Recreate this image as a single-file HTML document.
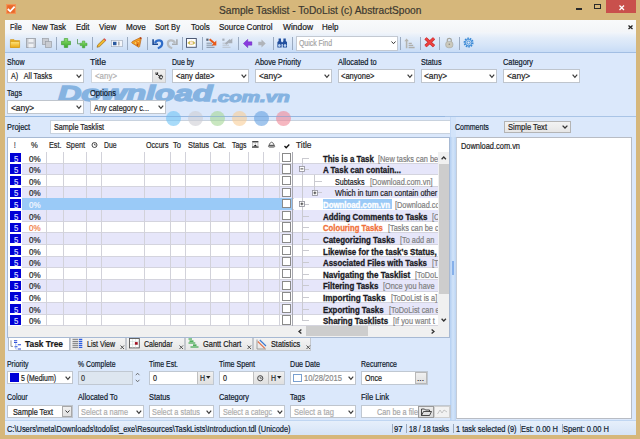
<!DOCTYPE html>
<html><head><meta charset="utf-8"><style>
*{margin:0;padding:0;box-sizing:border-box}
html,body{width:640px;height:439px;overflow:hidden}
body{background:#d6b77b;font-family:"Liberation Sans",sans-serif;position:relative}
.a{position:absolute}
.t{position:absolute;white-space:nowrap;line-height:1;transform-origin:0 0;-webkit-text-stroke:0.2px currentColor}
svg.a{overflow:visible}
</style></head><body>
<svg class="a" style="left:6.3px;top:4.3px" width="10" height="10" viewBox="0 0 10 10"><rect x="0" y="0" width="10" height="10" fill="#f39455"/><rect x="1.2" y="1.2" width="7.6" height="7.6" fill="#e9682a"/><path d="M1.8 5 L4.2 7.3 L8.6 2.6" stroke="#fff" stroke-width="1.8" fill="none"/></svg>
<div class="t" style="left:218.75px;top:4.69px;font-size:11px;color:#3b3830;transform:scaleX(0.924);">Sample Tasklist - ToDoList (c) AbstractSpoon</div>
<div class="a" style="left:576.3px;top:8.2px;width:5.6px;height:1.6px;background:#2a2a2a"></div>
<div class="a" style="left:593.5px;top:4.4px;width:7px;height:5px;border:1px solid #2a2a2a;border-top-width:1.6px"></div>
<div class="a" style="left:606.25px;top:0px;width:30px;height:13.1px;background:#c9504c"></div>
<svg class="a" style="left:618.5px;top:4.8px" width="5.5" height="5.5" viewBox="0 0 5.5 5.5"><path d="M0.5 0.5 L5 5 M5 0.5 L0.5 5" stroke="#fff" stroke-width="1.3"/></svg>
<div class="a" style="left:5px;top:20px;width:631px;height:415px;background:#dbe8fb"></div>
<div class="a" style="left:5px;top:20px;width:631px;height:12px;background:linear-gradient(#f9fafb,#f3f5f8)"></div>
<div class="t" style="left:10.1px;top:22.90px;font-size:8.5px;color:#1a1a1a;transform:scaleX(0.854);">File</div>
<div class="t" style="left:31.9px;top:22.90px;font-size:8.5px;color:#1a1a1a;transform:scaleX(0.927);">New Task</div>
<div class="t" style="left:75.7px;top:22.90px;font-size:8.5px;color:#1a1a1a;transform:scaleX(0.908);">Edit</div>
<div class="t" style="left:98.8px;top:22.90px;font-size:8.5px;color:#1a1a1a;transform:scaleX(0.941);">View</div>
<div class="t" style="left:125.6px;top:22.90px;font-size:8.5px;color:#1a1a1a;transform:scaleX(0.957);">Move</div>
<div class="t" style="left:155.3px;top:22.90px;font-size:8.5px;color:#1a1a1a;transform:scaleX(0.897);">Sort By</div>
<div class="t" style="left:190.7px;top:22.90px;font-size:8.5px;color:#1a1a1a;transform:scaleX(0.942);">Tools</div>
<div class="t" style="left:219.2px;top:22.90px;font-size:8.5px;color:#1a1a1a;transform:scaleX(0.942);">Source Control</div>
<div class="t" style="left:282.7px;top:22.90px;font-size:8.5px;color:#1a1a1a;transform:scaleX(0.992);">Window</div>
<div class="t" style="left:322.2px;top:22.90px;font-size:8.5px;color:#1a1a1a;transform:scaleX(0.932);">Help</div>
<svg class="a" style="left:628px;top:25px" width="5" height="4.5" viewBox="0 0 5 4.5"><path d="M0.5 0.5 L4.5 4 M4.5 0.5 L0.5 4" stroke="#222" stroke-width="1.3"/></svg>
<div class="a" style="left:5px;top:32px;width:631px;height:20px;background:linear-gradient(#f3f6fa 0%,#e2ecf9 30%,#d6e5f8 65%,#c8dcf6 100%)"></div>
<div class="a" style="left:5px;top:51.7px;width:631px;height:1px;background:#a2bee3"></div>
<div class="a" style="left:56px;top:37px;width:1px;height:12.5px;background:#9aaac0"></div>
<div class="a" style="left:91.6px;top:37px;width:1px;height:12.5px;background:#9aaac0"></div>
<div class="a" style="left:126.8px;top:37px;width:1px;height:12.5px;background:#9aaac0"></div>
<div class="a" style="left:146.5px;top:37px;width:1px;height:12.5px;background:#9aaac0"></div>
<div class="a" style="left:182.25px;top:37px;width:1px;height:12.5px;background:#9aaac0"></div>
<div class="a" style="left:201.5px;top:37px;width:1px;height:12.5px;background:#9aaac0"></div>
<div class="a" style="left:237.5px;top:37px;width:1px;height:12.5px;background:#9aaac0"></div>
<div class="a" style="left:272.6px;top:37px;width:1px;height:12.5px;background:#9aaac0"></div>
<div class="a" style="left:292.3px;top:37px;width:1px;height:12.5px;background:#9aaac0"></div>
<div class="a" style="left:400px;top:37px;width:1px;height:12.5px;background:#9aaac0"></div>
<div class="a" style="left:419.8px;top:37px;width:1px;height:12.5px;background:#9aaac0"></div>
<div class="a" style="left:439.4px;top:37px;width:1px;height:12.5px;background:#9aaac0"></div>
<div class="a" style="left:459.4px;top:37px;width:1px;height:12.5px;background:#9aaac0"></div>
<svg class="a" style="left:9.5px;top:38px" width="10" height="10" viewBox="0 0 10 10"><defs><linearGradient id="fg" x1="0" y1="0" x2="0" y2="1"><stop offset="0" stop-color="#fde27a"/><stop offset="1" stop-color="#eba812"/></linearGradient></defs><path d="M0.4 1.6 h3.6 l1 1 h4.6 v6.9 h-9.2z" fill="#e9b020" stroke="#c88a10" stroke-width="0.5"/><rect x="0.4" y="3.8" width="9.2" height="5.7" fill="url(#fg)" stroke="#d09512" stroke-width="0.4"/></svg>
<svg class="a" style="left:26px;top:38px" width="10" height="10" viewBox="0 0 10 10"><rect x="0.5" y="0.5" width="9" height="9" fill="#c9ccd2" stroke="#9a9ea6" stroke-width="0.8"/><rect x="2.5" y="1" width="5" height="3" fill="#eef0f3"/><rect x="2.5" y="6" width="5" height="3.5" fill="#eef0f3"/></svg>
<svg class="a" style="left:41.5px;top:38px" width="10" height="10" viewBox="0 0 10 10"><rect x="0.5" y="0.5" width="6" height="6" fill="#c9ccd2" stroke="#9a9ea6" stroke-width="0.7"/><rect x="3.5" y="3.5" width="6" height="6" fill="#c9ccd2" stroke="#9a9ea6" stroke-width="0.7"/></svg>
<svg class="a" style="left:61px;top:38px" width="10" height="10" viewBox="0 0 10 10"><defs><linearGradient id="gp" x1="0" y1="0" x2="0" y2="1"><stop offset="0" stop-color="#8ee070"/><stop offset="1" stop-color="#3aa82a"/></linearGradient></defs><path d="M3.3 0.5 h3.4 v2.8 h2.8 v3.4 h-2.8 v2.8 h-3.4 v-2.8 h-2.8 v-3.4 h2.8z" fill="url(#gp)" stroke="#3a9a2a" stroke-width="0.6"/></svg>
<svg class="a" style="left:76px;top:38px" width="12" height="10.5" viewBox="0 0 12 10.5"><path d="M1.5 1 v4.8 h2.6" stroke="#3f8a3a" stroke-width="0.7" fill="none"/><path d="M6.4 3 h2.4 v2.2 h2.2 v2.4 h-2.2 v2.2 h-2.4 v-2.2 h-2.2 v-2.4 h2.2z" fill="url(#gp)" stroke="#3a9a2a" stroke-width="0.5"/></svg>
<svg class="a" style="left:95.6px;top:38px" width="10.5" height="10" viewBox="0 0 10.5 10"><path d="M1 9.3 L1.8 6.8 L8 0.8 L9.8 2.5 L3.6 8.6z" fill="#f1b92e" stroke="#8a5a10" stroke-width="0.6"/><path d="M8 0.8 L9.8 2.5" stroke="#e04a5a" stroke-width="1.2"/></svg>
<svg class="a" style="left:111px;top:39.5px" width="11.5" height="7" viewBox="0 0 11.5 7"><rect x="0.3" y="0.3" width="11" height="6.4" fill="#f4f6fa" stroke="#9aa6b6" stroke-width="0.6"/><rect x="2" y="1.8" width="3.5" height="3.4" fill="#2a5aa0"/><rect x="7.5" y="1.6" width="0.8" height="3.8" fill="#666"/></svg>
<svg class="a" style="left:131px;top:37.3px" width="11" height="10.8" viewBox="0 0 11 10.8"><path d="M0.8 5.9 Q0.4 5.2 1.4 4.5 L9.3 0.6 Q10.4 0.3 10.2 1.6 L8.6 9.6 Q8.2 10.6 7.3 10 z" fill="#f2a424" stroke="#b8621a" stroke-width="0.7"/><path d="M3 5.6 L8.8 2.2 L7.6 8.4z" fill="#e8801c"/><circle cx="4.6" cy="6" r="0.9" fill="#fbd060"/><circle cx="6.4" cy="8" r="0.8" fill="#a83a10"/><circle cx="7.2" cy="4.6" r="0.8" fill="#fbd060"/><circle cx="9.6" cy="1.2" r="0.9" fill="#b04020"/></svg>
<svg class="a" style="left:151.5px;top:37.6px" width="11" height="11" viewBox="0 0 11 11"><path d="M3 5 C4.5 1.6 10 1.4 10.2 5.3 C10.3 8 8.4 9.5 5.8 10.2" stroke="#2f6cc8" stroke-width="2.2" fill="none"/><path d="M0.3 1.2 H1.9 V5.4 H6 V7 H0.3z" fill="#1d4a94"/></svg>
<svg class="a" style="left:166.5px;top:37.6px" width="11" height="11" viewBox="0 0 11 11"><path d="M8 5 C6.5 1.6 1 1.4 0.8 5.3 C0.7 8 2.6 9.5 5.2 10.2" stroke="#b8bcc0" stroke-width="2.2" fill="none"/><path d="M10.7 1.2 H9.1 V5.4 H5 V7 H10.7z" fill="#a8acb0"/></svg>
<svg class="a" style="left:186.1px;top:37.9px" width="10.8" height="9.8" viewBox="0 0 10.8 9.8"><rect x="0.5" y="0.5" width="9.8" height="8.8" fill="#fff" stroke="#4e5a74" stroke-width="1"/><path d="M1.3 4.9 Q5.4 0.6 9.5 4.9 Q5.4 9.2 1.3 4.9z" fill="#cdbb55"/><rect x="4" y="3.4" width="2.8" height="3" fill="#fde8dc"/></svg>
<svg class="a" style="left:206.25px;top:38px" width="11.5" height="10" viewBox="0 0 11.5 10"><rect x="0.3" y="0.6" width="2.2" height="2.2" fill="#556070"/><path d="M0.5 5.2 h5.5 M0.5 7.2 h6.5 M0.5 9.3 h8" stroke="#7a8898" stroke-width="0.9"/><path d="M3.6 1.2 L8.6 5.6" stroke="#e85a1a" stroke-width="2"/><path d="M10.3 2.6 V7.4 H5.6z" fill="#e85a1a"/></svg>
<svg class="a" style="left:221.9px;top:38px" width="11" height="10" viewBox="0 0 11 10"><rect x="0.3" y="0.6" width="2.2" height="2.2" fill="#a8b0ba"/><path d="M0.5 5.2 h5.5 M0.5 7.2 h6.5 M0.5 9.3 h8" stroke="#b8c0c8" stroke-width="0.9"/><path d="M3.6 6 L8.4 1.8" stroke="#a8aeb6" stroke-width="2"/><path d="M10.3 0.3 V5.2 H5.6z" fill="#a8aeb6"/></svg>
<svg class="a" style="left:242.5px;top:38.6px" width="9.2" height="9" viewBox="0 0 9.2 9"><path d="M0.3 4.5 L4.8 0.3 V2.8 H8.9 V6.2 H4.8 V8.7z" fill="#8a3ae0" stroke="#6020b0" stroke-width="0.4"/></svg>
<svg class="a" style="left:257.8px;top:38.6px" width="8" height="9" viewBox="0 0 8 9"><path d="M7.7 4.5 L3.5 0.5 V2.8 H0.3 V6.2 H3.5 V8.5z" fill="#b0b4ba"/></svg>
<svg class="a" style="left:277.3px;top:38px" width="10.4" height="10" viewBox="0 0 10.4 10"><path d="M1.6 0.5 h2.4 v2.5 l0.6 1 v5.5 h-4.2 v-5.5 l1.2 -1z M6.4 0.5 h2.4 v2.5 l1.2 1 v5.5 h-4.2 v-5.5 l0.6 -1z" fill="#23509e"/><rect x="3.6" y="4.2" width="3.2" height="1.8" fill="#23509e"/><ellipse cx="2.35" cy="7.6" rx="1.3" ry="1.5" fill="#bcd4f0"/><ellipse cx="8.05" cy="7.6" rx="1.3" ry="1.5" fill="#bcd4f0"/></svg>
<div class="a" style="left:296.25px;top:35.5px;width:102px;height:15px;background:#fff;border:1px solid #c3c9d2"></div>
<div class="t" style="left:299.4px;top:39.10px;font-size:8.5px;color:#a4a4a4;transform:scaleX(0.812);">Quick Find</div>
<svg class="a" style="left:390.5px;top:41.2px" width="5" height="3.5" viewBox="0 0 5 3.5"><path d="M0.5 0.5 L2.5 2.7 L4.5 0.5" stroke="#333" stroke-width="1" fill="none"/></svg>
<svg class="a" style="left:404.2px;top:37.5px" width="11" height="11" viewBox="0 0 11 11"><path d="M2.6 0.4 L0.3 3.2 H1.8 V10.2 H3.4 V3.2 H4.9z" fill="#b4b4b0"/><path d="M4.6 5.4 h3.2 M4.6 7.4 h4.6 M4.6 9.5 h6" stroke="#aeaeaa" stroke-width="1.3"/></svg>
<svg class="a" style="left:423.5px;top:37.3px" width="11.5" height="10.5" viewBox="0 0 11.5 10.5"><path d="M1.5 1.3 L10 9.2 M10 1.3 L1.5 9.2" stroke="#b82a2a" stroke-width="3.2"/><path d="M1.5 1.3 L10 9.2 M10 1.3 L1.5 9.2" stroke="#ee4040" stroke-width="2.1"/></svg>
<svg class="a" style="left:444.6px;top:37.2px" width="8.6" height="11.2" viewBox="0 0 8.6 11.2"><path d="M2.3 4.8 V3.2 C2.3 0.7 6.3 0.7 6.3 3.2 V4.8" stroke="#a4a49c" stroke-width="1.2" fill="none"/><rect x="0.7" y="4.4" width="7.2" height="6.3" rx="2.6" fill="#cbc9bc" stroke="#a4a49c" stroke-width="0.6"/><circle cx="4.3" cy="7.2" r="0.8" fill="#8a8a80"/></svg>
<svg class="a" style="left:462.6px;top:37.4px" width="11.2" height="11.2" viewBox="0 0 11.2 11.2"><circle cx="5.6" cy="5.6" r="4.1" fill="none" stroke="#3b8ad6" stroke-width="1.8" stroke-dasharray="1.6 0.9"/><circle cx="5.6" cy="5.6" r="3.2" fill="none" stroke="#3b8ad6" stroke-width="0.9"/><circle cx="5.6" cy="5.6" r="1.6" fill="none" stroke="#3b8ad6" stroke-width="0.9"/></svg>
<div class="t" style="left:57.5px;top:83.6px;font-size:21.5px;font-weight:bold;font-style:italic;color:#4d91d1;-webkit-text-stroke:1.4px #4d91d1;transform:scaleX(1.505);opacity:0.6">Download</div>
<div class="t" style="left:211.5px;top:90.3px;font-size:14px;font-weight:bold;font-style:italic;color:#4d91d1;-webkit-text-stroke:1.1px #4d91d1;transform:scaleX(1.47);opacity:0.6">.com.vn</div>
<div class="t" style="left:6.5px;top:57.80px;font-size:8.5px;color:#0f1a2c;transform:scaleX(0.823);">Show</div>
<div class="t" style="left:90px;top:57.80px;font-size:8.5px;color:#0f1a2c;transform:scaleX(1.016);">Title</div>
<div class="t" style="left:172px;top:57.80px;font-size:8.5px;color:#0f1a2c;transform:scaleX(0.817);">Due by</div>
<div class="t" style="left:255px;top:57.80px;font-size:8.5px;color:#0f1a2c;transform:scaleX(0.869);">Above Priority</div>
<div class="t" style="left:337.5px;top:57.80px;font-size:8.5px;color:#0f1a2c;transform:scaleX(0.872);">Allocated to</div>
<div class="t" style="left:420.5px;top:57.80px;font-size:8.5px;color:#0f1a2c;transform:scaleX(0.851);">Status</div>
<div class="t" style="left:503px;top:57.80px;font-size:8.5px;color:#0f1a2c;transform:scaleX(0.870);">Category</div>
<div class="a" style="left:7px;top:69px;width:76.5px;height:13.8px;background:#fff;border:1px solid #bfc5cd"></div>
<div class="t" style="left:10.7px;top:72.30px;font-size:8.5px;color:#1e1e1e;transform:scaleX(0.845);">A)&nbsp;&nbsp; All Tasks</div>
<svg class="a" style="left:75.5px;top:73.9px" width="5.8" height="4.2" viewBox="0 0 5.8 4.2"><path d="M0.6 0.6 L2.9 3.3 L5.2 0.6" stroke="#3a3a3a" stroke-width="1.2" fill="none"/></svg>
<div class="a" style="left:90.5px;top:69px;width:62px;height:13.8px;background:#fff;border:1px solid #cfd6de"></div>
<div class="t" style="left:94.5px;top:71.90px;font-size:8.5px;color:#b0b0b0;transform:scaleX(0.931);">&lt;any&gt;</div>
<div class="a" style="left:152px;top:69.2px;width:14px;height:13.4px;background:linear-gradient(#f0f0f0,#e4e4e4);border:1px solid #c8cbd0"></div>
<svg class="a" style="left:154.8px;top:72px" width="9" height="8.5" viewBox="0 0 9 8.5"><path d="M1 0.4 V2.6 M2.6 0.4 V2 M1 2.6 L2.2 2.2 L4.6 4.4" stroke="#222" stroke-width="1" fill="none"/><path d="M4.2 3.6 L6.2 2.6 L8.2 4.6 L6.8 7.6 L4.8 7.2 L3.6 5.4z" fill="#444"/><circle cx="6.1" cy="5.2" r="1" fill="#eee"/></svg>
<div class="a" style="left:172px;top:69px;width:77px;height:13.8px;background:#fff;border:1px solid #bfc5cd"></div>
<div class="t" style="left:175.7px;top:72.30px;font-size:8.5px;color:#1e1e1e;transform:scaleX(0.905);">&lt;any date&gt;</div>
<svg class="a" style="left:241.0px;top:73.9px" width="5.8" height="4.2" viewBox="0 0 5.8 4.2"><path d="M0.6 0.6 L2.9 3.3 L5.2 0.6" stroke="#3a3a3a" stroke-width="1.2" fill="none"/></svg>
<div class="a" style="left:255px;top:69px;width:76.5px;height:13.8px;background:#fff;border:1px solid #bfc5cd"></div>
<div class="t" style="left:258.7px;top:72.30px;font-size:8.5px;color:#1e1e1e;transform:scaleX(0.982);">&lt;any&gt;</div>
<svg class="a" style="left:323.5px;top:73.9px" width="5.8" height="4.2" viewBox="0 0 5.8 4.2"><path d="M0.6 0.6 L2.9 3.3 L5.2 0.6" stroke="#3a3a3a" stroke-width="1.2" fill="none"/></svg>
<div class="a" style="left:337.5px;top:69px;width:77px;height:13.8px;background:#fff;border:1px solid #bfc5cd"></div>
<div class="t" style="left:341.2px;top:72.30px;font-size:8.5px;color:#1e1e1e;transform:scaleX(0.886);">&lt;anyone&gt;</div>
<svg class="a" style="left:406.5px;top:73.9px" width="5.8" height="4.2" viewBox="0 0 5.8 4.2"><path d="M0.6 0.6 L2.9 3.3 L5.2 0.6" stroke="#3a3a3a" stroke-width="1.2" fill="none"/></svg>
<div class="a" style="left:420.5px;top:69px;width:76px;height:13.8px;background:#fff;border:1px solid #bfc5cd"></div>
<div class="t" style="left:424.2px;top:72.30px;font-size:8.5px;color:#1e1e1e;transform:scaleX(0.982);">&lt;any&gt;</div>
<svg class="a" style="left:488.5px;top:73.9px" width="5.8" height="4.2" viewBox="0 0 5.8 4.2"><path d="M0.6 0.6 L2.9 3.3 L5.2 0.6" stroke="#3a3a3a" stroke-width="1.2" fill="none"/></svg>
<div class="a" style="left:503px;top:69px;width:77px;height:13.8px;background:#fff;border:1px solid #bfc5cd"></div>
<div class="t" style="left:506.7px;top:72.30px;font-size:8.5px;color:#1e1e1e;transform:scaleX(0.982);">&lt;any&gt;</div>
<svg class="a" style="left:572.0px;top:73.9px" width="5.8" height="4.2" viewBox="0 0 5.8 4.2"><path d="M0.6 0.6 L2.9 3.3 L5.2 0.6" stroke="#3a3a3a" stroke-width="1.2" fill="none"/></svg>
<div class="t" style="left:7px;top:89.00px;font-size:8.5px;color:#0f1a2c;transform:scaleX(0.835);">Tags</div>
<div class="t" style="left:90px;top:89.00px;font-size:8.5px;color:#0f1a2c;transform:scaleX(0.888);">Options</div>
<div class="a" style="left:7px;top:100.4px;width:76.6px;height:13.6px;background:#fff;border:1px solid #bfc5cd"></div>
<div class="t" style="left:10.7px;top:103.70px;font-size:8.5px;color:#1e1e1e;transform:scaleX(0.982);">&lt;any&gt;</div>
<svg class="a" style="left:75.6px;top:105.30000000000001px" width="5.8" height="4.2" viewBox="0 0 5.8 4.2"><path d="M0.6 0.6 L2.9 3.3 L5.2 0.6" stroke="#3a3a3a" stroke-width="1.2" fill="none"/></svg>
<div class="a" style="left:90px;top:100.4px;width:75.6px;height:13.6px;background:#fff;border:1px solid #bfc5cd"></div>
<div class="t" style="left:93.7px;top:103.70px;font-size:8.5px;color:#1e1e1e;transform:scaleX(0.869);">Any category c...</div>
<svg class="a" style="left:157.6px;top:105.30000000000001px" width="5.8" height="4.2" viewBox="0 0 5.8 4.2"><path d="M0.6 0.6 L2.9 3.3 L5.2 0.6" stroke="#3a3a3a" stroke-width="1.2" fill="none"/></svg>
<div class="a" style="left:5px;top:115.5px;width:631px;height:1px;background:#a9c4e6"></div>
<div class="t" style="left:6.5px;top:122.70px;font-size:8.5px;color:#0f1a2c;transform:scaleX(0.869);">Project</div>
<div class="a" style="left:49.5px;top:119.8px;width:401px;height:13.8px;background:#fff;border:1px solid #c8d2de"></div>
<div class="t" style="left:53.5px;top:122.70px;font-size:8.5px;color:#1e1e1e;transform:scaleX(0.849);">Sample Tasklist</div>
<div class="a" style="left:165.9px;top:111.4px;width:14.8px;height:15px;border-radius:50%;background:rgba(110,195,245,0.6)"></div>
<div class="a" style="left:188.1px;top:111.4px;width:14.8px;height:15px;border-radius:50%;background:rgba(205,205,212,0.6)"></div>
<div class="a" style="left:210.1px;top:111.4px;width:14.8px;height:15px;border-radius:50%;background:rgba(165,215,150,0.6)"></div>
<div class="a" style="left:231.9px;top:111.4px;width:14.8px;height:15px;border-radius:50%;background:rgba(248,205,150,0.6)"></div>
<div class="a" style="left:253.9px;top:111.4px;width:14.8px;height:15px;border-radius:50%;background:rgba(100,160,225,0.6)"></div>
<div class="a" style="left:276.40000000000003px;top:111.4px;width:14.8px;height:15px;border-radius:50%;background:rgba(240,135,150,0.6)"></div>
<div class="a" style="left:5px;top:115.5px;width:440px;height:0.8px;background:rgba(130,170,220,0.5)"></div>
<div class="a" style="left:6.5px;top:137.2px;width:443.0px;height:200.8px;background:#fff;border:1px solid #a7b9d3"></div>
<div class="t" style="left:14.3px;top:141.00px;font-size:8.5px;color:#2a2a2a;transform:scaleX(0.678);">!</div>
<div class="t" style="left:31px;top:141.00px;font-size:8.5px;color:#2a2a2a;transform:scaleX(0.900);">%</div>
<div class="t" style="left:48.5px;top:141.00px;font-size:8.5px;color:#2a2a2a;transform:scaleX(0.854);">Est.</div>
<div class="t" style="left:65.5px;top:141.00px;font-size:8.5px;color:#2a2a2a;transform:scaleX(0.855);">Spent</div>
<div class="t" style="left:103.9px;top:141.00px;font-size:8.5px;color:#2a2a2a;transform:scaleX(0.808);">Due</div>
<div class="t" style="left:146px;top:141.00px;font-size:8.5px;color:#2a2a2a;transform:scaleX(0.836);">Occurs</div>
<div class="t" style="left:172.5px;top:141.00px;font-size:8.5px;color:#2a2a2a;transform:scaleX(0.891);">To</div>
<div class="t" style="left:187.5px;top:141.00px;font-size:8.5px;color:#2a2a2a;transform:scaleX(0.872);">Status</div>
<div class="t" style="left:213px;top:141.00px;font-size:8.5px;color:#2a2a2a;transform:scaleX(0.834);">Cat.</div>
<div class="t" style="left:231.5px;top:141.00px;font-size:8.5px;color:#2a2a2a;transform:scaleX(0.808);">Tags</div>
<div class="t" style="left:296.25px;top:141.00px;font-size:8.5px;color:#2a2a2a;transform:scaleX(0.985);">Title</div>
<svg class="a" style="left:91.2px;top:142px" width="7" height="6" viewBox="0 0 7 6"><circle cx="3.5" cy="3" r="2.5" fill="none" stroke="#333" stroke-width="0.9"/><path d="M3.5 1.6 V3 H5" stroke="#333" stroke-width="0.7" fill="none"/></svg>
<svg class="a" style="left:252.2px;top:141px" width="6.6" height="6.8" viewBox="0 0 6.6 6.8"><rect x="0.2" y="0" width="6.2" height="1.5" fill="#4a4a4a"/><rect x="0" y="5.3" width="6.6" height="1.5" fill="#4a4a4a"/><path d="M0.7 1.5 V5.3 M5.9 1.5 V5.3" stroke="#999" stroke-width="0.7"/><path d="M1.6 5.3 L3.3 3.4 L5 5.3z" fill="#111"/><path d="M1.8 1.8 H4.8 L3.3 3.1z" fill="#bbb"/></svg>
<svg class="a" style="left:268.2px;top:141px" width="7.2" height="6.6" viewBox="0 0 7.2 6.6"><path d="M1.4 4.4 V3.2 Q3.6 -0.8 5.8 3.2 V4.4" fill="none" stroke="#555" stroke-width="0.9"/><rect x="0.45" y="4.2" width="6.3" height="2" rx="1" fill="#fff" stroke="#555" stroke-width="0.8"/><path d="M1 4.9 H6.2" stroke="#222" stroke-width="0.9"/></svg>
<svg class="a" style="left:283.6px;top:143.6px" width="5.8" height="4.4" viewBox="0 0 5.8 4.4"><path d="M0.5 2 L2.2 3.8 L5.3 0.5" stroke="#111" stroke-width="1.3" fill="none"/></svg>
<div class="a" style="left:22px;top:163.22px;width:426.5px;height:11.62px;background:#e6e6fa"></div>
<div class="a" style="left:22px;top:186.45999999999998px;width:426.5px;height:11.62px;background:#e6e6fa"></div>
<div class="a" style="left:22px;top:209.7px;width:426.5px;height:11.62px;background:#e6e6fa"></div>
<div class="a" style="left:22px;top:232.94px;width:426.5px;height:11.62px;background:#e6e6fa"></div>
<div class="a" style="left:22px;top:256.18px;width:426.5px;height:11.62px;background:#e6e6fa"></div>
<div class="a" style="left:22px;top:279.41999999999996px;width:426.5px;height:11.62px;background:#e6e6fa"></div>
<div class="a" style="left:22px;top:302.65999999999997px;width:426.5px;height:11.62px;background:#e6e6fa"></div>
<div class="a" style="left:22px;top:162.72px;width:416.4px;height:0.7px;background:#d4d4de"></div>
<div class="a" style="left:22px;top:174.34px;width:416.4px;height:0.7px;background:#d4d4de"></div>
<div class="a" style="left:22px;top:185.95999999999998px;width:416.4px;height:0.7px;background:#d4d4de"></div>
<div class="a" style="left:22px;top:197.57999999999998px;width:416.4px;height:0.7px;background:#d4d4de"></div>
<div class="a" style="left:22px;top:209.2px;width:416.4px;height:0.7px;background:#d4d4de"></div>
<div class="a" style="left:22px;top:220.82px;width:416.4px;height:0.7px;background:#d4d4de"></div>
<div class="a" style="left:22px;top:232.44px;width:416.4px;height:0.7px;background:#d4d4de"></div>
<div class="a" style="left:22px;top:244.06px;width:416.4px;height:0.7px;background:#d4d4de"></div>
<div class="a" style="left:22px;top:255.68px;width:416.4px;height:0.7px;background:#d4d4de"></div>
<div class="a" style="left:22px;top:267.29999999999995px;width:416.4px;height:0.7px;background:#d4d4de"></div>
<div class="a" style="left:22px;top:278.91999999999996px;width:416.4px;height:0.7px;background:#d4d4de"></div>
<div class="a" style="left:22px;top:290.53999999999996px;width:416.4px;height:0.7px;background:#d4d4de"></div>
<div class="a" style="left:22px;top:302.15999999999997px;width:416.4px;height:0.7px;background:#d4d4de"></div>
<div class="a" style="left:22px;top:313.78px;width:416.4px;height:0.7px;background:#d4d4de"></div>
<div class="a" style="left:22px;top:325.4px;width:416.4px;height:0.7px;background:#d4d4de"></div>
<div class="a" style="left:46.25px;top:151.6px;width:0.7px;height:174.29999999999998px;background:#d2d2da"></div>
<div class="a" style="left:63.3px;top:151.6px;width:0.7px;height:174.29999999999998px;background:#d2d2da"></div>
<div class="a" style="left:86.1px;top:151.6px;width:0.7px;height:174.29999999999998px;background:#d2d2da"></div>
<div class="a" style="left:101.1px;top:151.6px;width:0.7px;height:174.29999999999998px;background:#d2d2da"></div>
<div class="a" style="left:143.8px;top:151.6px;width:0.7px;height:174.29999999999998px;background:#d2d2da"></div>
<div class="a" style="left:170.1px;top:151.6px;width:0.7px;height:174.29999999999998px;background:#d2d2da"></div>
<div class="a" style="left:185.1px;top:151.6px;width:0.7px;height:174.29999999999998px;background:#d2d2da"></div>
<div class="a" style="left:209.9px;top:151.6px;width:0.7px;height:174.29999999999998px;background:#d2d2da"></div>
<div class="a" style="left:228.7px;top:151.6px;width:0.7px;height:174.29999999999998px;background:#d2d2da"></div>
<div class="a" style="left:247.9px;top:151.6px;width:0.7px;height:174.29999999999998px;background:#d2d2da"></div>
<div class="a" style="left:263.25px;top:151.6px;width:0.7px;height:174.29999999999998px;background:#d2d2da"></div>
<div class="a" style="left:278.75px;top:151.6px;width:0.7px;height:174.29999999999998px;background:#d2d2da"></div>
<div class="a" style="left:22px;top:198.07999999999998px;width:271.3px;height:11.62px;background:#9acaf7"></div>
<div class="a" style="left:292px;top:151.6px;width:1px;height:174.29999999999998px;background:#a8a8b0"></div>
<div class="a" style="left:293.6px;top:151.6px;width:144.8px;height:174px;overflow:hidden">
<div class="a" style="left:0px;top:46.48px;width:144.8px;height:11.62px;background:#fff"></div>
<div class="a" style="left:29.099999999999966px;top:46.98px;width:69.1px;height:10.62px;background:#9acaf7"></div>
<div class="a" style="left:8.199999999999989px;top:6.310000000000002px;width:0.8px;height:162.67999999999998px;background:#cacad0"></div>
<div class="a" style="left:8.399999999999977px;top:5.909999999999997px;width:7.3px;height:0.8px;background:#cacad0"></div>
<div class="a" style="left:8.399999999999977px;top:17.53px;width:7.3px;height:0.8px;background:#cacad0"></div>
<div class="a" style="left:20.899999999999977px;top:29.149999999999977px;width:7.5px;height:0.8px;background:#cacad0"></div>
<div class="a" style="left:20.899999999999977px;top:40.76999999999998px;width:7.5px;height:0.8px;background:#cacad0"></div>
<div class="a" style="left:8.399999999999977px;top:52.389999999999986px;width:7.3px;height:0.8px;background:#cacad0"></div>
<div class="a" style="left:8.399999999999977px;top:64.00999999999999px;width:7.3px;height:0.8px;background:#cacad0"></div>
<div class="a" style="left:8.399999999999977px;top:75.63px;width:7.3px;height:0.8px;background:#cacad0"></div>
<div class="a" style="left:8.399999999999977px;top:87.25px;width:7.3px;height:0.8px;background:#cacad0"></div>
<div class="a" style="left:8.399999999999977px;top:98.87px;width:7.3px;height:0.8px;background:#cacad0"></div>
<div class="a" style="left:8.399999999999977px;top:110.49000000000004px;width:7.3px;height:0.8px;background:#cacad0"></div>
<div class="a" style="left:8.399999999999977px;top:122.11000000000004px;width:7.3px;height:0.8px;background:#cacad0"></div>
<div class="a" style="left:8.399999999999977px;top:133.73000000000005px;width:7.3px;height:0.8px;background:#cacad0"></div>
<div class="a" style="left:8.399999999999977px;top:145.35000000000005px;width:7.3px;height:0.8px;background:#cacad0"></div>
<div class="a" style="left:8.399999999999977px;top:156.97px;width:7.3px;height:0.8px;background:#cacad0"></div>
<div class="a" style="left:8.399999999999977px;top:168.59px;width:7.3px;height:0.8px;background:#cacad0"></div>
<div class="a" style="left:20.899999999999977px;top:23.24000000000001px;width:0.8px;height:17.93px;background:#cacad0"></div>
<svg class="a" style="left:5.7px;top:14.83px" width="5.8" height="5.8" viewBox="0 0 5.8 5.8"><rect x="0.4" y="0.4" width="5" height="5" fill="#fff" stroke="#8e8e98" stroke-width="0.8"/><path d="M1.5 2.9 H4.3" stroke="#333" stroke-width="0.9"/></svg>
<svg class="a" style="left:18.7px;top:38.07px" width="5.8" height="5.8" viewBox="0 0 5.8 5.8"><rect x="0.4" y="0.4" width="5" height="5" fill="#fff" stroke="#8e8e98" stroke-width="0.8"/><path d="M1.5 2.9 H4.3" stroke="#333" stroke-width="0.9"/><path d="M2.9 1.5 V4.3" stroke="#333" stroke-width="0.9"/></svg>
<svg class="a" style="left:5.7px;top:49.69px" width="5.8" height="5.8" viewBox="0 0 5.8 5.8"><rect x="0.4" y="0.4" width="5" height="5" fill="#fff" stroke="#8e8e98" stroke-width="0.8"/><path d="M1.5 2.9 H4.3" stroke="#333" stroke-width="0.9"/><path d="M2.9 1.5 V4.3" stroke="#333" stroke-width="0.9"/></svg>
<div class="t" style="left:29.80px;top:3.00px;font-size:8.5px;color:#1a1a24;transform:scaleX(0.922);font-weight:bold;-webkit-text-stroke:0.3px currentColor;">This is a Task</div>
<div class="t" style="left:84.80px;top:3.00px;font-size:8.5px;color:#808080;transform:scaleX(0.865)">[New tasks can be</div>
<div class="t" style="left:29.80px;top:14.62px;font-size:8.5px;color:#1a1a24;transform:scaleX(0.931);font-weight:bold;-webkit-text-stroke:0.3px currentColor;">A Task can contain...</div>
<div class="t" style="left:41.90px;top:26.24px;font-size:8.5px;color:#1a1a24;transform:scaleX(0.844);">Subtasks</div>
<div class="t" style="left:76.00px;top:26.24px;font-size:8.5px;color:#808080;transform:scaleX(0.865)">[Download.com.vn]</div>
<div class="t" style="left:41.90px;top:37.86px;font-size:8.5px;color:#1a1a24;transform:scaleX(0.873);">Which in turn can contain other</div>
<div class="t" style="left:29.80px;top:49.48px;font-size:8.5px;color:#ffffff;transform:scaleX(0.921);font-weight:bold;-webkit-text-stroke:0.3px currentColor;">Download.com.vn</div>
<div class="t" style="left:101.60px;top:49.48px;font-size:8.5px;color:#808080;transform:scaleX(0.865)">[Download.co</div>
<div class="t" style="left:29.80px;top:61.10px;font-size:8.5px;color:#1a1a24;transform:scaleX(0.934);font-weight:bold;-webkit-text-stroke:0.3px currentColor;">Adding Comments to Tasks</div>
<div class="t" style="left:138.50px;top:61.10px;font-size:8.5px;color:#808080;transform:scaleX(0.865)">[C</div>
<div class="t" style="left:29.80px;top:72.72px;font-size:8.5px;color:#f0703a;transform:scaleX(0.907);font-weight:bold;-webkit-text-stroke:0.3px currentColor;">Colouring Tasks</div>
<div class="t" style="left:94.70px;top:72.72px;font-size:8.5px;color:#808080;transform:scaleX(0.865)">[Tasks can be c</div>
<div class="t" style="left:29.80px;top:84.34px;font-size:8.5px;color:#1a1a24;transform:scaleX(0.931);font-weight:bold;-webkit-text-stroke:0.3px currentColor;">Categorizing Tasks</div>
<div class="t" style="left:106.60px;top:84.34px;font-size:8.5px;color:#808080;transform:scaleX(0.865)">[To add an</div>
<div class="t" style="left:29.80px;top:95.96px;font-size:8.5px;color:#1a1a24;transform:scaleX(0.939);font-weight:bold;-webkit-text-stroke:0.3px currentColor;">Likewise for the task's Status,</div>
<div class="t" style="left:29.80px;top:107.58px;font-size:8.5px;color:#1a1a24;transform:scaleX(0.926);font-weight:bold;-webkit-text-stroke:0.3px currentColor;">Associated Files with Tasks</div>
<div class="t" style="left:138.00px;top:107.58px;font-size:8.5px;color:#808080;transform:scaleX(0.865)">[T</div>
<div class="t" style="left:29.80px;top:119.20px;font-size:8.5px;color:#1a1a24;transform:scaleX(0.947);font-weight:bold;-webkit-text-stroke:0.3px currentColor;">Navigating the Tasklist</div>
<div class="t" style="left:121.80px;top:119.20px;font-size:8.5px;color:#808080;transform:scaleX(0.865)">[ToDoL</div>
<div class="t" style="left:29.80px;top:130.82px;font-size:8.5px;color:#1a1a24;transform:scaleX(0.932);font-weight:bold;-webkit-text-stroke:0.3px currentColor;">Filtering Tasks</div>
<div class="t" style="left:89.90px;top:130.82px;font-size:8.5px;color:#808080;transform:scaleX(0.865)">[Once you have</div>
<div class="t" style="left:29.80px;top:142.44px;font-size:8.5px;color:#1a1a24;transform:scaleX(0.960);font-weight:bold;-webkit-text-stroke:0.3px currentColor;">Importing Tasks</div>
<div class="t" style="left:97.40px;top:142.44px;font-size:8.5px;color:#808080;transform:scaleX(0.865)">[ToDoList is a]</div>
<div class="t" style="left:29.80px;top:154.06px;font-size:8.5px;color:#1a1a24;transform:scaleX(0.925);font-weight:bold;-webkit-text-stroke:0.3px currentColor;">Exporting Tasks</div>
<div class="t" style="left:95.20px;top:154.06px;font-size:8.5px;color:#808080;transform:scaleX(0.865)">[ToDoList can e</div>
<div class="t" style="left:29.80px;top:165.68px;font-size:8.5px;color:#1a1a24;transform:scaleX(0.933);font-weight:bold;-webkit-text-stroke:0.3px currentColor;">Sharing Tasklists</div>
<div class="t" style="left:99.40px;top:165.68px;font-size:8.5px;color:#808080;transform:scaleX(0.865)">[If you want t</div>
</div>
<div class="a" style="left:9.8px;top:152.79999999999998px;width:11px;height:9.1px;background:#0000d6"></div>
<div class="t" style="left:13.6px;top:154.60px;font-size:8.5px;color:#d8dcff;transform:scaleX(0.910);">5</div>
<div class="t" style="left:28.9px;top:154.60px;font-size:8.5px;color:#1e1e1e;transform:scaleX(0.944);">0%</div>
<div class="a" style="left:282px;top:152.7px;width:8.5px;height:9.2px;background:#fff;border:1px solid #8a8a8a"></div>
<div class="a" style="left:9.8px;top:164.42px;width:11px;height:9.1px;background:#0000d6"></div>
<div class="t" style="left:13.6px;top:166.22px;font-size:8.5px;color:#d8dcff;transform:scaleX(0.910);">5</div>
<div class="t" style="left:28.9px;top:166.22px;font-size:8.5px;color:#1e1e1e;transform:scaleX(0.944);">0%</div>
<div class="a" style="left:282px;top:164.32px;width:8.5px;height:9.2px;background:#fff;border:1px solid #8a8a8a"></div>
<div class="a" style="left:9.8px;top:176.04px;width:11px;height:9.1px;background:#0000d6"></div>
<div class="t" style="left:13.6px;top:177.84px;font-size:8.5px;color:#d8dcff;transform:scaleX(0.910);">5</div>
<div class="t" style="left:28.9px;top:177.84px;font-size:8.5px;color:#1e1e1e;transform:scaleX(0.944);">0%</div>
<div class="a" style="left:282px;top:175.94px;width:8.5px;height:9.2px;background:#fff;border:1px solid #8a8a8a"></div>
<div class="a" style="left:9.8px;top:187.65999999999997px;width:11px;height:9.1px;background:#0000d6"></div>
<div class="t" style="left:13.6px;top:189.46px;font-size:8.5px;color:#d8dcff;transform:scaleX(0.910);">5</div>
<div class="t" style="left:28.9px;top:189.46px;font-size:8.5px;color:#1e1e1e;transform:scaleX(0.944);">0%</div>
<div class="a" style="left:282px;top:187.55999999999997px;width:8.5px;height:9.2px;background:#fff;border:1px solid #8a8a8a"></div>
<div class="a" style="left:9.8px;top:199.27999999999997px;width:11px;height:9.1px;background:#0000d6"></div>
<div class="t" style="left:13.6px;top:201.08px;font-size:8.5px;color:#d8dcff;transform:scaleX(0.910);">5</div>
<div class="t" style="left:28.9px;top:201.08px;font-size:8.5px;color:#f4f8ff;transform:scaleX(0.944);">0%</div>
<div class="a" style="left:282px;top:199.17999999999998px;width:8.5px;height:9.2px;background:#fff;border:1px solid #8a8a8a"></div>
<div class="a" style="left:9.8px;top:210.89999999999998px;width:11px;height:9.1px;background:#0000d6"></div>
<div class="t" style="left:13.6px;top:212.70px;font-size:8.5px;color:#d8dcff;transform:scaleX(0.910);">5</div>
<div class="t" style="left:28.9px;top:212.70px;font-size:8.5px;color:#1e1e1e;transform:scaleX(0.944);">0%</div>
<div class="a" style="left:282px;top:210.79999999999998px;width:8.5px;height:9.2px;background:#fff;border:1px solid #8a8a8a"></div>
<div class="a" style="left:9.8px;top:222.51999999999998px;width:11px;height:9.1px;background:#0000d6"></div>
<div class="t" style="left:13.6px;top:224.32px;font-size:8.5px;color:#d8dcff;transform:scaleX(0.910);">5</div>
<div class="t" style="left:28.9px;top:224.32px;font-size:8.5px;color:#f07a40;transform:scaleX(0.944);">0%</div>
<div class="a" style="left:282px;top:222.42px;width:8.5px;height:9.2px;background:#fff;border:1px solid #8a8a8a"></div>
<div class="a" style="left:9.8px;top:234.14px;width:11px;height:9.1px;background:#0000d6"></div>
<div class="t" style="left:13.6px;top:235.94px;font-size:8.5px;color:#d8dcff;transform:scaleX(0.910);">5</div>
<div class="t" style="left:28.9px;top:235.94px;font-size:8.5px;color:#1e1e1e;transform:scaleX(0.944);">0%</div>
<div class="a" style="left:282px;top:234.04px;width:8.5px;height:9.2px;background:#fff;border:1px solid #8a8a8a"></div>
<div class="a" style="left:9.8px;top:245.76px;width:11px;height:9.1px;background:#0000d6"></div>
<div class="t" style="left:13.6px;top:247.56px;font-size:8.5px;color:#d8dcff;transform:scaleX(0.910);">5</div>
<div class="t" style="left:28.9px;top:247.56px;font-size:8.5px;color:#1e1e1e;transform:scaleX(0.944);">0%</div>
<div class="a" style="left:282px;top:245.66px;width:8.5px;height:9.2px;background:#fff;border:1px solid #8a8a8a"></div>
<div class="a" style="left:9.8px;top:257.38px;width:11px;height:9.1px;background:#0000d6"></div>
<div class="t" style="left:13.6px;top:259.18px;font-size:8.5px;color:#d8dcff;transform:scaleX(0.910);">5</div>
<div class="t" style="left:28.9px;top:259.18px;font-size:8.5px;color:#1e1e1e;transform:scaleX(0.944);">0%</div>
<div class="a" style="left:282px;top:257.28000000000003px;width:8.5px;height:9.2px;background:#fff;border:1px solid #8a8a8a"></div>
<div class="a" style="left:9.8px;top:268.99999999999994px;width:11px;height:9.1px;background:#0000d6"></div>
<div class="t" style="left:13.6px;top:270.80px;font-size:8.5px;color:#d8dcff;transform:scaleX(0.910);">5</div>
<div class="t" style="left:28.9px;top:270.80px;font-size:8.5px;color:#1e1e1e;transform:scaleX(0.944);">0%</div>
<div class="a" style="left:282px;top:268.9px;width:8.5px;height:9.2px;background:#fff;border:1px solid #8a8a8a"></div>
<div class="a" style="left:9.8px;top:280.61999999999995px;width:11px;height:9.1px;background:#0000d6"></div>
<div class="t" style="left:13.6px;top:282.42px;font-size:8.5px;color:#d8dcff;transform:scaleX(0.910);">5</div>
<div class="t" style="left:28.9px;top:282.42px;font-size:8.5px;color:#1e1e1e;transform:scaleX(0.944);">0%</div>
<div class="a" style="left:282px;top:280.52px;width:8.5px;height:9.2px;background:#fff;border:1px solid #8a8a8a"></div>
<div class="a" style="left:9.8px;top:292.23999999999995px;width:11px;height:9.1px;background:#0000d6"></div>
<div class="t" style="left:13.6px;top:294.04px;font-size:8.5px;color:#d8dcff;transform:scaleX(0.910);">5</div>
<div class="t" style="left:28.9px;top:294.04px;font-size:8.5px;color:#1e1e1e;transform:scaleX(0.944);">0%</div>
<div class="a" style="left:282px;top:292.14px;width:8.5px;height:9.2px;background:#fff;border:1px solid #8a8a8a"></div>
<div class="a" style="left:9.8px;top:303.85999999999996px;width:11px;height:9.1px;background:#0000d6"></div>
<div class="t" style="left:13.6px;top:305.66px;font-size:8.5px;color:#d8dcff;transform:scaleX(0.910);">5</div>
<div class="t" style="left:28.9px;top:305.66px;font-size:8.5px;color:#1e1e1e;transform:scaleX(0.944);">0%</div>
<div class="a" style="left:282px;top:303.76px;width:8.5px;height:9.2px;background:#fff;border:1px solid #8a8a8a"></div>
<div class="a" style="left:9.8px;top:315.47999999999996px;width:11px;height:9.1px;background:#0000d6"></div>
<div class="t" style="left:13.6px;top:317.28px;font-size:8.5px;color:#d8dcff;transform:scaleX(0.910);">5</div>
<div class="t" style="left:28.9px;top:317.28px;font-size:8.5px;color:#1e1e1e;transform:scaleX(0.944);">0%</div>
<div class="a" style="left:282px;top:315.38px;width:8.5px;height:9.2px;background:#fff;border:1px solid #8a8a8a"></div>
<div class="a" style="left:438.4px;top:151.6px;width:11px;height:174px;background:#f0f0f0"></div>
<div class="a" style="left:439px;top:164px;width:9.8px;height:130px;background:#cdcdcd"></div>
<svg class="a" style="left:441.2px;top:156.3px" width="5.5" height="4" viewBox="0 0 5.5 4"><path d="M0.6 3.3 L2.75 1 L4.9 3.3" stroke="#333" stroke-width="1.3" fill="none"/></svg>
<svg class="a" style="left:441.2px;top:317.5px" width="5.5" height="4" viewBox="0 0 5.5 4"><path d="M0.6 0.7 L2.75 3 L4.9 0.7" stroke="#333" stroke-width="1.3" fill="none"/></svg>
<div class="a" style="left:7.5px;top:325.6px;width:441px;height:11.6px;background:#f0f0f0"></div>
<div class="a" style="left:306px;top:326.3px;width:62px;height:9.5px;background:#cdcdcd"></div>
<svg class="a" style="left:297.6px;top:328.8px" width="4" height="5" viewBox="0 0 4 5"><path d="M3.4 0.5 L1 2.5 L3.4 4.5" stroke="#333" stroke-width="1.3" fill="none"/></svg>
<svg class="a" style="left:430.5px;top:328.8px" width="4" height="5" viewBox="0 0 4 5"><path d="M0.6 0.5 L3 2.5 L0.6 4.5" stroke="#333" stroke-width="1.3" fill="none"/></svg>
<div class="a" style="left:449.8px;top:117px;width:6.2px;height:20px;background:#d3e4fa;border-left:1px solid #c4d9f5"></div>
<div class="a" style="left:449.8px;top:137px;width:6.2px;height:283.5px;background:linear-gradient(90deg,#b4cff2,#d2e4f9 50%,#bcd5f4)"></div>
<div class="a" style="left:451.8px;top:261px;width:1.8px;height:14px;background:#86b0ea"></div>
<div class="t" style="left:454.6px;top:122.50px;font-size:8.5px;color:#0f1a2c;transform:scaleX(0.823);">Comments</div>
<div class="a" style="left:503.8px;top:120.5px;width:67px;height:12.8px;background:linear-gradient(#f3f3f3,#e6e6e6);border:1px solid #b4b4b4"></div>
<div class="t" style="left:507.6px;top:123.30px;font-size:8.5px;color:#1e1e1e;transform:scaleX(0.891);">Simple Text</div>
<svg class="a" style="left:561.8px;top:125px" width="6" height="4" viewBox="0 0 6 4"><path d="M0.6 0.6 L3 3 L5.4 0.6" stroke="#333" stroke-width="1.3" fill="none"/></svg>
<div class="a" style="left:456px;top:137.3px;width:176px;height:282px;background:#fff;border:1px solid #b8bcc4;border-left:1px solid #c4ccd8"></div>
<div class="t" style="left:461px;top:141.60px;font-size:8.5px;color:#1e1e1e;transform:scaleX(0.873);">Download.com.vn</div>
<div class="a" style="left:7.5px;top:337.7px;width:62.5px;height:13.6px;background:#fff;border:1px solid #b4bcc8;border-top:none"></div>
<svg class="a" style="left:9.5px;top:338.5px" width="12" height="11" viewBox="0 0 12 11"><path d="M1 1.3 V7.4 H3" stroke="#8a8a8a" stroke-width="0.9" fill="none"/><path d="M4 1.8 h3.2 M4 3.5 h3.2 M8 5.8 h3 M4.5 7.7 h3 M8 10 h3" stroke="#2a4ad8" stroke-width="1.1"/><path d="M5.6 3.5 V7.7 M5.6 5.8 H8 M5.6 7.7 V10 H8" stroke="#7a9ae8" stroke-width="0.5" fill="none"/></svg>
<div class="t" style="left:25px;top:339.90px;font-size:8.5px;color:#1a1a1a;font-weight:bold;transform:scaleX(0.985);">Task Tree</div>
<div class="a" style="left:70px;top:337.7px;width:55.599999999999994px;height:13.1px;background:linear-gradient(#f4f4f4,#e6e6e6);border:1px solid #c4c8ce;border-top:none"></div>
<div class="t" style="left:86.7px;top:340.30px;font-size:8.5px;color:#1a1a1a;transform:scaleX(0.827);">List View</div>
<svg class="a" style="left:120.4px;top:345.3px" width="4.5" height="4.5" viewBox="0 0 4.5 4.5"><path d="M0.5 0.5 L4 4 M4 0.5 L0.5 4" stroke="#444" stroke-width="0.9"/></svg>
<div class="a" style="left:125.6px;top:337.7px;width:59.099999999999994px;height:13.1px;background:linear-gradient(#f4f4f4,#e6e6e6);border:1px solid #c4c8ce;border-top:none"></div>
<div class="t" style="left:144.2px;top:340.30px;font-size:8.5px;color:#1a1a1a;transform:scaleX(0.826);">Calendar</div>
<svg class="a" style="left:179px;top:345.3px" width="4.5" height="4.5" viewBox="0 0 4.5 4.5"><path d="M0.5 0.5 L4 4 M4 0.5 L0.5 4" stroke="#444" stroke-width="0.9"/></svg>
<div class="a" style="left:184.7px;top:337.7px;width:68.60000000000002px;height:13.1px;background:linear-gradient(#f4f4f4,#e6e6e6);border:1px solid #c4c8ce;border-top:none"></div>
<div class="t" style="left:203px;top:340.30px;font-size:8.5px;color:#1a1a1a;transform:scaleX(0.872);">Gantt Chart</div>
<svg class="a" style="left:247px;top:345.3px" width="4.5" height="4.5" viewBox="0 0 4.5 4.5"><path d="M0.5 0.5 L4 4 M4 0.5 L0.5 4" stroke="#444" stroke-width="0.9"/></svg>
<div class="a" style="left:253.3px;top:337.7px;width:58.0px;height:13.1px;background:linear-gradient(#f4f4f4,#e6e6e6);border:1px solid #c4c8ce;border-top:none"></div>
<div class="t" style="left:270.8px;top:340.30px;font-size:8.5px;color:#1a1a1a;transform:scaleX(0.859);">Statistics</div>
<svg class="a" style="left:305.6px;top:345.3px" width="4.5" height="4.5" viewBox="0 0 4.5 4.5"><path d="M0.5 0.5 L4 4 M4 0.5 L0.5 4" stroke="#444" stroke-width="0.9"/></svg>
<svg class="a" style="left:71.5px;top:338px" width="11" height="11" viewBox="0 0 11 11"><path d="M0.5 1.3 h5.5 M0.5 3.4 h5.5 M0.5 5.3 h5.5 M0.5 7.3 h5.5 M0.5 9.3 h5.5" stroke="#6a6a6a" stroke-width="0.9"/><path d="M6.8 1.3 h3.5 M6.8 3.4 h3.5 M6.8 5.3 h3.5 M6.8 7.3 h3.5 M6.8 9.3 h3.5" stroke="#2a5ae0" stroke-width="1.2"/></svg>
<svg class="a" style="left:128.8px;top:338.3px" width="11" height="10.5" viewBox="0 0 11 10.5"><rect x="0.5" y="0.5" width="9.8" height="9.4" fill="#fff" stroke="#555" stroke-width="0.9"/><path d="M1 3.5 h9 M1 6.3 h9 M3.6 1 v9 M6.6 1 v9" stroke="#c8d8d0" stroke-width="0.5"/><rect x="5.9" y="4.1" width="2.8" height="2.6" fill="#a01020"/></svg>
<svg class="a" style="left:187.5px;top:338.3px" width="11" height="10" viewBox="0 0 11 10"><path d="M0.5 1 h3.5 M1.5 3.2 h4 M0.5 5 h6.8 M5 7.2 h3.5 M2.5 9 h8" stroke="#1e9a2e" stroke-width="1.2"/></svg>
<svg class="a" style="left:255.5px;top:338.5px" width="11" height="10.5" viewBox="0 0 11 10.5"><path d="M1 0.5 V10 H10" stroke="#8a8a8a" stroke-width="0.8" fill="none"/><path d="M1.8 2.5 L8.8 9.3" stroke="#e0704a" stroke-width="1.1"/><path d="M3.8 1 L10 7" stroke="#3a78d0" stroke-width="1.1"/></svg>
<div class="t" style="left:6.6px;top:359.60px;font-size:8.5px;color:#0f1a2c;transform:scaleX(0.813);">Priority</div>
<div class="t" style="left:77.7px;top:359.60px;font-size:8.5px;color:#0f1a2c;transform:scaleX(0.810);">% Complete</div>
<div class="t" style="left:148.6px;top:359.60px;font-size:8.5px;color:#0f1a2c;transform:scaleX(0.815);">Time Est.</div>
<div class="t" style="left:219.3px;top:359.60px;font-size:8.5px;color:#0f1a2c;transform:scaleX(0.834);">Time Spent</div>
<div class="t" style="left:290px;top:359.60px;font-size:8.5px;color:#0f1a2c;transform:scaleX(0.835);">Due Date</div>
<div class="t" style="left:360.6px;top:359.60px;font-size:8.5px;color:#0f1a2c;transform:scaleX(0.819);">Recurrence</div>
<div class="t" style="left:6.6px;top:393.20px;font-size:8.5px;color:#0f1a2c;transform:scaleX(0.819);">Colour</div>
<div class="t" style="left:77.7px;top:393.20px;font-size:8.5px;color:#0f1a2c;transform:scaleX(0.856);">Allocated To</div>
<div class="t" style="left:148.6px;top:393.20px;font-size:8.5px;color:#0f1a2c;transform:scaleX(0.872);">Status</div>
<div class="t" style="left:219.3px;top:393.20px;font-size:8.5px;color:#0f1a2c;transform:scaleX(0.870);">Category</div>
<div class="t" style="left:290px;top:393.20px;font-size:8.5px;color:#0f1a2c;transform:scaleX(0.835);">Tags</div>
<div class="t" style="left:360.6px;top:393.20px;font-size:8.5px;color:#0f1a2c;transform:scaleX(0.885);">File Link</div>
<div class="a" style="left:7px;top:370.8px;width:66.3px;height:13.5px;background:#fff;border:1px solid #bfc5cd"></div>
<svg class="a" style="left:65.3px;top:375.7px" width="5.8" height="4.2" viewBox="0 0 5.8 4.2"><path d="M0.6 0.6 L2.9 3.3 L5.2 0.6" stroke="#3a3a3a" stroke-width="1.2" fill="none"/></svg>
<div class="a" style="left:10px;top:373px;width:9.2px;height:9.2px;background:#0000d8"></div>
<div class="t" style="left:21px;top:373.70px;font-size:8.5px;color:#1e1e1e;transform:scaleX(0.814);">5 (Medium)</div>
<div class="a" style="left:77.5px;top:371px;width:55px;height:13.5px;background:#dde6f0;border:1px solid #c0c8d2"></div>
<div class="t" style="left:81px;top:373.70px;font-size:8.5px;color:#333;transform:scaleX(0.846);">0</div>
<svg class="a" style="left:135.3px;top:372px" width="5.5" height="11" viewBox="0 0 5.5 11"><path d="M0.8 3.2 L2.6 1.2 L4.4 3.2" stroke="#555" stroke-width="0.8" fill="none"/><path d="M0.8 7.8 L2.6 9.8 L4.4 7.8" stroke="#555" stroke-width="0.8" fill="none"/></svg>
<div class="a" style="left:148.6px;top:371px;width:65.6px;height:13.5px;background:#fff;border:1px solid #c0c8d2"></div>
<div class="t" style="left:152.5px;top:373.70px;font-size:8.5px;color:#1e1e1e;transform:scaleX(0.846);">0</div>
<div class="a" style="left:196.7px;top:372px;width:16.5px;height:11.5px;background:linear-gradient(#f0f0f0,#e0e0e0);border-left:1px solid #c0c0c0"></div>
<div class="t" style="left:199.5px;top:373.70px;font-size:8.5px;color:#1e1e1e;transform:scaleX(0.815);">H</div>
<svg class="a" style="left:206px;top:376.3px" width="4.5" height="3" viewBox="0 0 4.5 3"><path d="M0 0 H4.5 L2.25 2.8z" fill="#222"/></svg>
<div class="a" style="left:219.3px;top:371px;width:65.9px;height:13.5px;background:#fff;border:1px solid #c0c8d2"></div>
<div class="t" style="left:223.2px;top:373.70px;font-size:8.5px;color:#1e1e1e;transform:scaleX(0.846);">0</div>
<div class="a" style="left:252.5px;top:372px;width:15px;height:11.5px;background:linear-gradient(#f0f0f0,#e0e0e0);border-left:1px solid #c0c0c0"></div>
<svg class="a" style="left:256.5px;top:374.5px" width="6.5" height="6.5" viewBox="0 0 6.5 6.5"><circle cx="3.25" cy="3.25" r="2.6" fill="none" stroke="#333" stroke-width="0.9"/><path d="M3.25 1.8 V3.25 H4.8" stroke="#333" stroke-width="0.7" fill="none"/></svg>
<div class="a" style="left:267.5px;top:372px;width:16.7px;height:11.5px;background:linear-gradient(#f0f0f0,#e0e0e0);border-left:1px solid #c0c0c0"></div>
<div class="t" style="left:270.5px;top:373.70px;font-size:8.5px;color:#1e1e1e;transform:scaleX(0.815);">H</div>
<svg class="a" style="left:277px;top:376.3px" width="4.5" height="3" viewBox="0 0 4.5 3"><path d="M0 0 H4.5 L2.25 2.8z" fill="#222"/></svg>
<div class="a" style="left:290px;top:371px;width:66.3px;height:13.5px;background:#fff;border:1px solid #bfc5cd"></div>
<svg class="a" style="left:348.3px;top:375.9px" width="5.8" height="4.2" viewBox="0 0 5.8 4.2"><path d="M0.6 0.6 L2.9 3.3 L5.2 0.6" stroke="#3a3a3a" stroke-width="1.2" fill="none"/></svg>
<div class="a" style="left:292.8px;top:373.5px;width:8.8px;height:8.8px;background:#fff;border:1px solid #7aa0d0"></div>
<div class="t" style="left:304px;top:373.70px;font-size:8.5px;color:#8a8a8a;transform:scaleX(0.893);">10/28/2015</div>
<div class="a" style="left:360.6px;top:371px;width:67px;height:13.5px;background:#fff;border:1px solid #c0c8d2"></div>
<div class="t" style="left:364.5px;top:373.70px;font-size:8.5px;color:#1e1e1e;transform:scaleX(0.837);">Once</div>
<div class="a" style="left:414.5px;top:372px;width:12.5px;height:11.5px;background:linear-gradient(#f0f0f0,#e0e0e0);border:1px solid #b8b8b8"></div>
<div class="t" style="left:417px;top:374.10px;font-size:8.5px;color:#222;transform:scaleX(0.988);">...</div>
<div class="a" style="left:7px;top:404.7px;width:66.3px;height:13.6px;background:#fff;border:1px solid #bfc5cd"></div>
<svg class="a" style="left:65.3px;top:409.59999999999997px" width="5.8" height="4.2" viewBox="0 0 5.8 4.2"><path d="M0.6 0.6 L2.9 3.3 L5.2 0.6" stroke="#3a3a3a" stroke-width="1.2" fill="none"/></svg>
<div class="t" style="left:13px;top:407.50px;font-size:8.5px;color:#1e1e1e;transform:scaleX(0.858);">Sample Text</div>
<div class="a" style="left:62.4px;top:406px;width:9.6px;height:11px;background:linear-gradient(#f0f0f0,#e0e0e0);border:1px solid #a8a8a8"></div>
<svg class="a" style="left:64.8px;top:409.8px" width="5" height="3.5" viewBox="0 0 5 3.5"><path d="M0.5 0.5 L2.5 2.6 L4.5 0.5" stroke="#333" stroke-width="1" fill="none"/></svg>
<div class="a" style="left:77.7px;top:404.7px;width:66.3px;height:13.6px;background:#fff;border:1px solid #bfc5cd"></div>
<div class="t" style="left:81.4px;top:408.00px;font-size:8.5px;color:#adadad;transform:scaleX(0.865);">Select a name</div>
<svg class="a" style="left:136.0px;top:409.59999999999997px" width="5.8" height="4.2" viewBox="0 0 5.8 4.2"><path d="M0.6 0.6 L2.9 3.3 L5.2 0.6" stroke="#3a3a3a" stroke-width="1.2" fill="none"/></svg>
<div class="a" style="left:148.6px;top:404.7px;width:65.6px;height:13.6px;background:#fff;border:1px solid #bfc5cd"></div>
<div class="t" style="left:152.29999999999998px;top:408.00px;font-size:8.5px;color:#adadad;transform:scaleX(0.861);">Select a status</div>
<svg class="a" style="left:206.2px;top:409.59999999999997px" width="5.8" height="4.2" viewBox="0 0 5.8 4.2"><path d="M0.6 0.6 L2.9 3.3 L5.2 0.6" stroke="#3a3a3a" stroke-width="1.2" fill="none"/></svg>
<div class="a" style="left:219.3px;top:404.7px;width:65.9px;height:13.6px;background:#fff;border:1px solid #bfc5cd"></div>
<div class="t" style="left:223.0px;top:408.00px;font-size:8.5px;color:#adadad;transform:scaleX(0.843);">Select a categc</div>
<svg class="a" style="left:277.20000000000005px;top:409.59999999999997px" width="5.8" height="4.2" viewBox="0 0 5.8 4.2"><path d="M0.6 0.6 L2.9 3.3 L5.2 0.6" stroke="#3a3a3a" stroke-width="1.2" fill="none"/></svg>
<div class="a" style="left:290px;top:404.7px;width:66.3px;height:13.6px;background:#fff;border:1px solid #bfc5cd"></div>
<div class="t" style="left:293.7px;top:408.00px;font-size:8.5px;color:#adadad;transform:scaleX(0.891);">Select a tag</div>
<svg class="a" style="left:348.3px;top:409.59999999999997px" width="5.8" height="4.2" viewBox="0 0 5.8 4.2"><path d="M0.6 0.6 L2.9 3.3 L5.2 0.6" stroke="#3a3a3a" stroke-width="1.2" fill="none"/></svg>
<div class="a" style="left:360.6px;top:404.7px;width:90px;height:13.6px;background:#fff;border:1px solid #c0c8d2"></div>
<div class="t" style="left:376.7px;top:407.50px;font-size:8.5px;color:#a8a8a8;transform:scaleX(0.859);">Can be a file</div>
<div class="a" style="left:418px;top:405.5px;width:16px;height:12px;background:linear-gradient(#ececec,#dadada);border:1px solid #9a9a9a"></div>
<svg class="a" style="left:420.5px;top:407.5px" width="11" height="8" viewBox="0 0 11 8"><path d="M0.5 1 h3 l1 1 h4 v1.5 M0.5 1 v6.5 h8 l2 -4 h-8 l-2 4" stroke="#222" stroke-width="0.8" fill="none"/></svg>
<div class="a" style="left:434px;top:405.5px;width:16px;height:12px;background:#f2f2f2;border:1px solid #d0d0d0"></div>
<svg class="a" style="left:436.5px;top:408px" width="11" height="7" viewBox="0 0 11 7"><path d="M0.5 6 L3 2 L5 5 L7 2 L10 4" stroke="#c0c0c0" stroke-width="0.9" fill="none"/></svg>
<div class="a" style="left:5px;top:420px;width:631px;height:15px;background:linear-gradient(#e6effb,#d6e4f7);border-top:1px solid #c0d6f2"></div>
<div class="t" style="left:6.6px;top:424.50px;font-size:8.5px;color:#101c30;transform:scaleX(0.875);">C:\Users\meta\Downloads\todolist_exe\Resources\TaskLists\Introduction.tdl (Unicode)</div>
<div class="a" style="left:391.5px;top:424px;width:0.7px;height:9px;background:#9aa8bc"></div>
<div class="a" style="left:405.6px;top:424px;width:0.7px;height:9px;background:#9aa8bc"></div>
<div class="a" style="left:452.8px;top:424px;width:0.7px;height:9px;background:#9aa8bc"></div>
<div class="a" style="left:519.7px;top:424px;width:0.7px;height:9px;background:#9aa8bc"></div>
<div class="a" style="left:561.7px;top:424px;width:0.7px;height:9px;background:#9aa8bc"></div>
<div class="t" style="left:393.8px;top:424.50px;font-size:8.5px;color:#101c30;transform:scaleX(0.899);">97</div>
<div class="t" style="left:409px;top:424.50px;font-size:8.5px;color:#101c30;transform:scaleX(0.830);">18 / 18 tasks</div>
<div class="t" style="left:456px;top:424.50px;font-size:8.5px;color:#101c30;transform:scaleX(0.871);">1 task selected (9)</div>
<div class="t" style="left:521px;top:424.50px;font-size:8.5px;color:#101c30;transform:scaleX(0.880);">Est: 0.00 H</div>
<div class="t" style="left:563px;top:424.50px;font-size:8.5px;color:#101c30;transform:scaleX(0.885);">Spent: 0.00 H</div>
</body></html>
